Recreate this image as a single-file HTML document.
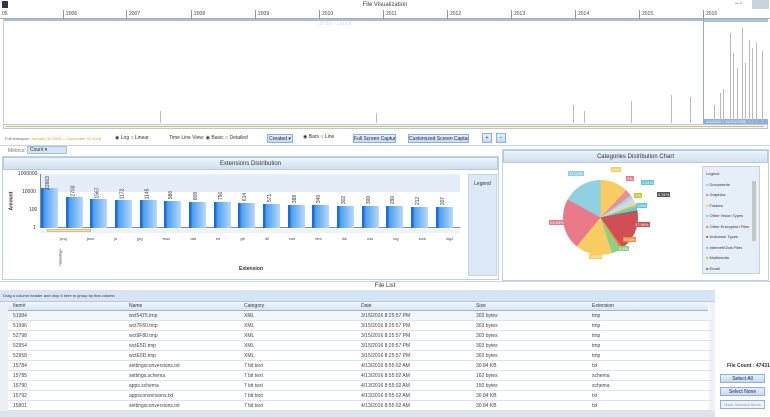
<!DOCTYPE html>
<html><head><style>
*{margin:0;padding:0;box-sizing:border-box}
body{width:770px;height:417px;overflow:hidden;background:#fff;font-family:"Liberation Sans",sans-serif;font-size:5px;color:#333;position:relative}
.a{position:absolute}
.yr{position:absolute;top:10px;height:9px;border-left:1px solid #999;font-size:5px;padding-left:2px;line-height:8px;color:#444}
.tl{position:absolute;width:1px;background:#b8b8c8;bottom:294px}
.hdr{position:absolute;background:linear-gradient(#eef4fb,#cfdff0);border:1px solid #b5c9e0;text-align:center;font-size:6px;color:#333}
.btn{position:absolute;background:linear-gradient(#e6f0fb,#c5daf1);border:1px solid #8fb0d8;font-size:5px;text-align:center;line-height:8px;color:#224;white-space:nowrap;overflow:hidden}
.bar{position:absolute;bottom:189px;width:17px;background:linear-gradient(90deg,#1a6fd6 0,#1a6fd6 2px,#4a9cf0 3px,#b9dafb)}
.bl{position:absolute;font-size:5px;transform:rotate(-90deg);color:#333}
.row{position:absolute;left:8px;width:704px;height:10px;border-bottom:1px solid #dde3ea;font-size:5px;line-height:10px;color:#444}
.row span,.gh span{position:absolute}
</style></head><body>
<div class="a" style="left:0;top:0;width:770px;height:10px;background:#fff"></div>
<div class="a" style="left:2px;top:1px;width:6px;height:7px;background:#335"></div>
<div class="a" style="left:0;top:2px;width:770px;text-align:center;font-size:6px;color:#444">File Visualization</div>
<div class="a" style="left:735px;top:1px;font-size:6px;color:#555">– ▫</div>
<div class="a" style="left:752px;top:0;width:17px;height:9px;background:#c9d3e0"></div>
<div class="a" style="left:0;top:10px;width:770px;height:9px;border-bottom:1px solid #aab"></div>
<div class="yr" style="left:0;border:none">05</div>
<div class="yr" style="left:63px">2006</div><div class="yr" style="left:126px">2007</div><div class="yr" style="left:191px">2008</div><div class="yr" style="left:255px">2009</div><div class="yr" style="left:319px">2010</div><div class="yr" style="left:383px">2011</div><div class="yr" style="left:447px">2012</div><div class="yr" style="left:511px">2013</div><div class="yr" style="left:575px">2014</div><div class="yr" style="left:639px">2015</div><div class="yr" style="left:703px">2016</div>
<div class="a" style="left:3px;top:19px;width:700px;height:2px;background:#a9bfd9"></div>
<div class="a" style="left:319px;top:21px;font-size:6px;color:#d8d8e0">2010 - 2019</div>
<div class="a" style="left:3px;top:19px;width:1px;height:104px;background:#ccd"></div>
<div class="a" style="left:703px;top:19px;width:66px;height:105px;border-left:1px solid #9ab"></div>
<div class="a" style="left:704px;top:19px;width:64px;height:3px;background:#a9c2de"></div>
<div class="a" style="left:704px;top:119px;width:64px;height:5px;background:#8fb0da;color:#fff;font-size:4px;line-height:5px;padding-left:2px;white-space:nowrap">1/1/2016 - 12/31/2016</div>
<div class="tl" style="left:160px;height:12px"></div><div class="tl" style="left:376px;height:10px"></div><div class="tl" style="left:573px;height:18px"></div><div class="tl" style="left:584px;height:12px"></div><div class="tl" style="left:631px;height:22px"></div><div class="tl" style="left:671px;height:28px"></div><div class="tl" style="left:690px;height:26px"></div>
<div class="tl" style="left:714px;height:18px"></div><div class="tl" style="left:720px;height:30px"></div><div class="tl" style="left:723px;height:34px"></div><div class="tl" style="left:730px;height:90px"></div><div class="tl" style="left:733px;height:70px"></div><div class="tl" style="left:737px;height:55px"></div><div class="tl" style="left:742px;height:95px"></div><div class="tl" style="left:745px;height:60px"></div><div class="tl" style="left:749px;height:83px"></div><div class="tl" style="left:752px;height:75px"></div><div class="tl" style="left:756px;height:80px"></div><div class="tl" style="left:762px;height:72px"></div>
<div class="a" style="left:3px;top:124px;width:765px;height:5px;border:1px solid #b7c8dc;background:#f4f7fb"></div>
<div class="a" style="left:6px;top:126px;width:758px;height:1px;background:#d9b862"></div>
<div class="a" style="left:5px;top:136px;font-size:4px;color:#666;white-space:nowrap">Full timespan: <span style="color:#e0a030">January 06 2005 — December 31 2016</span></div>
<div class="a" style="left:115px;top:135px;font-size:5px;white-space:nowrap">◉ Log ○ Linear</div>
<div class="a" style="left:169px;top:135px;font-size:5px;white-space:nowrap">Time Line View: ◉ Basic ○ Detailed</div>
<div class="btn" style="left:267px;top:134px;width:26px;height:9px">Created ▾</div>
<div class="a" style="left:303px;top:134px;font-size:5px;white-space:nowrap">◉ Bars ○ Line</div>
<div class="btn" style="left:353px;top:134px;width:43px;height:9px">Full Screen Capture</div>
<div class="btn" style="left:408px;top:134px;width:61px;height:9px">Customized Screen Capture</div>
<div class="btn" style="left:482px;top:133px;width:10px;height:10px">+</div>
<div class="btn" style="left:496px;top:133px;width:10px;height:10px">−</div>
<div class="a" style="left:0;top:145px;width:770px;height:1px;background:#c7d5e5"></div>
<div class="a" style="left:8px;top:148px;font-size:5px;color:#777">Metrics:</div>
<div class="a" style="left:27px;top:146px;width:40px;height:8px;background:#d5e4f5;border:1px solid #a8c0dc;font-size:5px;line-height:7px;padding-left:2px">Count ▾</div>
<div class="a" style="left:2px;top:156px;width:497px;height:124px;border:1px solid #c0d1e3"></div>
<div class="hdr" style="left:3px;top:157px;width:495px;height:13px;line-height:12px">Extensions Distribution</div>
<div class="a" style="left:40px;top:174px;width:420px;height:54px;background:#fff;border-left:1px solid #888;border-bottom:1px solid #888"></div>
<div class="a" style="left:41px;top:174px;width:419px;height:18px;background:#e4eef8"></div>
<div class="a" style="left:18px;top:171px;font-size:5px">1000000</div><div class="a" style="left:22px;top:189px;font-size:5px">10000</div><div class="a" style="left:29px;top:207px;font-size:5px">100</div><div class="a" style="left:33px;top:225px;font-size:5px">1</div>
<div class="a" style="left:2px;top:198px;font-size:5px;font-weight:bold;transform:rotate(-90deg)">Amount</div>
<div class="bar" style="left:41px;height:40px"></div><div class="bar" style="left:66px;height:31px"></div><div class="bar" style="left:90px;height:29px"></div><div class="bar" style="left:115px;height:28px"></div><div class="bar" style="left:140px;height:28px"></div><div class="bar" style="left:164px;height:27px"></div><div class="bar" style="left:189px;height:26px"></div><div class="bar" style="left:214px;height:26px"></div><div class="bar" style="left:238px;height:25px"></div><div class="bar" style="left:263px;height:24px"></div><div class="bar" style="left:288px;height:23px"></div><div class="bar" style="left:312px;height:23px"></div><div class="bar" style="left:337px;height:22px"></div><div class="bar" style="left:362px;height:22px"></div><div class="bar" style="left:386px;height:22px"></div><div class="bar" style="left:411px;height:21px"></div><div class="bar" style="left:436px;height:21px"></div>
<div class="bl" style="left:41px;top:180px">22663</div><div class="bl" style="left:68px;top:188px">2703</div><div class="bl" style="left:92px;top:190px">1567</div><div class="bl" style="left:117px;top:191px">1172</div><div class="bl" style="left:142px;top:191px">1145</div><div class="bl" style="left:167px;top:192px">986</div><div class="bl" style="left:192px;top:193px">809</div><div class="bl" style="left:217px;top:193px">756</div><div class="bl" style="left:241px;top:194px">614</div><div class="bl" style="left:266px;top:195px">571</div><div class="bl" style="left:291px;top:196px">388</div><div class="bl" style="left:315px;top:196px">340</div><div class="bl" style="left:340px;top:197px">302</div><div class="bl" style="left:365px;top:197px">300</div><div class="bl" style="left:389px;top:197px">290</div><div class="bl" style="left:414px;top:198px">212</div><div class="bl" style="left:439px;top:198px">207</div>
<div class="a" style="left:40px;top:229px;width:420px;height:4px;background:#eef3f9"></div>
<div class="a" style="left:47px;top:229px;width:44px;height:3px;background:#f2e2b0;border:1px solid #d8c080"></div>
<div class="a" style="left:41px;top:238px;font-size:4px;line-height:27px;">
<span style="position:absolute;left:4px;transform:rotate(-90deg);width:30px;top:0">&lt;missing&gt;</span></div>
<div class="a" style="left:60px;top:236px;width:400px;font-size:4px;color:#444;word-spacing:19px;white-space:nowrap;">png json js jpg resx dat txt gif dll xml htm lnk css log lock log2</div>
<div class="a" style="left:239px;top:266px;font-size:5px;font-weight:bold">Extension</div>
<div class="a" style="left:468px;top:174px;width:29px;height:102px;background:#dde9f6;border:1px solid #c3d4e7;font-size:5px;text-align:center;padding-top:6px">Legend</div>
<div class="a" style="left:502px;top:149px;width:267px;height:132px;border:1px solid #c0d1e3"></div>
<div class="hdr" style="left:503px;top:150px;width:265px;height:13px;line-height:12px">Categories Distribution Chart</div>
<div class="a" style="left:563px;top:180px;width:75px;height:75px;border-radius:50%;background:conic-gradient(#f6cc63 0 12%,#e98f9a 12% 15%,#a6d6e6 15% 16.5%,#d8d8d8 16.5% 19.5%,#c8c83a 19.5% 20.5%,#67c6d6 20.5% 22%,#555 22% 22.3%,#cf4f55 22.3% 40%,#ee8b3a 40% 41%,#8ccf88 41% 45%,#f6cc63 45% 61%,#e97a8a 61% 83%,#8fd0e2 83% 100%)"></div>
<div class="a" style="left:568px;top:171px;background:#8fd0e2;color:#fff;font-size:4px;padding:0 1px">17.03%</div>
<div class="a" style="left:611px;top:167px;background:#f6cc63;color:#fff;font-size:4px;padding:0 1px">12%</div>
<div class="a" style="left:626px;top:176px;background:#e97a8a;color:#fff;font-size:4px;padding:0 1px">3%</div>
<div class="a" style="left:641px;top:180px;background:#67c6d6;color:#fff;font-size:4px;padding:0 1px">1.51%</div>
<div class="a" style="left:634px;top:193px;background:#c8c83a;color:#fff;font-size:4px;padding:0 1px">1%</div>
<div class="a" style="left:657px;top:192px;background:#555;color:#fff;font-size:4px;padding:0 1px">0.31%</div>
<div class="a" style="left:636px;top:203px;background:#67c6d6;color:#fff;font-size:4px;padding:0 1px">1.6%</div>
<div class="a" style="left:634px;top:222px;background:#cf4f55;color:#fff;font-size:4px;padding:0 1px">17.96%</div>
<div class="a" style="left:549px;top:220px;background:#e97a8a;color:#fff;font-size:4px;padding:0 1px">24.53%</div>
<div class="a" style="left:623px;top:237px;background:#ee8b3a;color:#fff;font-size:4px;padding:0 1px">0.04%</div>
<div class="a" style="left:618px;top:246px;background:#8ccf88;color:#fff;font-size:4px;padding:0 1px">4.4%</div>
<div class="a" style="left:589px;top:254px;background:#f6cc63;color:#fff;font-size:4px;padding:0 1px">15.9%</div>
<div class="a" style="left:702px;top:166px;width:58px;height:108px;background:#e6eef8;border:1px solid #c0d1e3;font-size:4px;line-height:10.5px;padding:2px 0 0 3px;white-space:nowrap">Legend<br>
<span style="color:#8fd0e2">■</span> Documents<br><span style="color:#e97a8a">■</span> Graphics<br><span style="color:#f6cc63">■</span> Folders<br><span style="color:#8ccf88">■</span> Other Vision Types<br><span style="color:#ee8b3a">■</span> Other Encryption Files<br><span style="color:#cf4f55">■</span> Unknown Types<br><span style="color:#67c6d6">■</span> Internet/Chat Files<br><span style="color:#c8c83a">■</span> Multimedia<br><span style="color:#777">■</span> Email</div>
<div class="a" style="left:752px;top:181px;width:4px;height:60px;background:#c7c7c7"></div>
<div class="a" style="left:0;top:281px;width:770px;height:1px;background:#c7d5e5"></div>
<div class="a" style="left:0;top:283px;width:770px;text-align:center;font-size:6px">File List</div>
<div class="a" style="left:0;top:290px;width:715px;height:11px;background:#d6e4f4;font-size:4px;line-height:11px;padding-left:3px">Drag a column header and drop it here to group by that column</div>
<div class="a" style="left:0;top:301px;width:715px;height:116px;border:1px solid #b8c8da;background:#fff"></div>
<div class="a" style="left:0;top:302px;width:8px;height:115px;background:#eceff3"></div>
<div class="gh a" style="left:8px;top:302px;width:700px;height:9px;background:linear-gradient(#f2f6fb,#d9e5f2);border-bottom:1px solid #9fb6d0;font-size:5px;line-height:9px">
<span style="left:5px">Item#</span><span style="left:121px">Name</span><span style="left:236px">Category</span><span style="left:353px">Date</span><span style="left:468px">Size</span><span style="left:584px">Extension</span></div>
<div class="a" style="left:709px;top:302px;width:6px;height:115px;background:#eef1f5"></div>
<div class="row" style="top:311px;background:#f3f7fc"><span style="left:5px">51984</span><span style="left:121px">wct5475.tmp</span><span style="left:236px">XML</span><span style="left:353px">3/15/2016 8:25:57 PM</span><span style="left:468px">303 bytes</span><span style="left:584px">tmp</span></div>
<div class="row" style="top:321px"><span style="left:5px">51996</span><span style="left:121px">wct7F60.tmp</span><span style="left:236px">XML</span><span style="left:353px">3/15/2016 8:25:57 PM</span><span style="left:468px">303 bytes</span><span style="left:584px">tmp</span></div>
<div class="row" style="top:331px"><span style="left:5px">52798</span><span style="left:121px">wct9F80.tmp</span><span style="left:236px">XML</span><span style="left:353px">3/15/2016 8:25:57 PM</span><span style="left:468px">303 bytes</span><span style="left:584px">tmp</span></div>
<div class="row" style="top:341px"><span style="left:5px">52954</span><span style="left:121px">wctE5D.tmp</span><span style="left:236px">XML</span><span style="left:353px">3/15/2016 8:25:57 PM</span><span style="left:468px">303 bytes</span><span style="left:584px">tmp</span></div>
<div class="row" style="top:351px"><span style="left:5px">52958</span><span style="left:121px">wctE0D.tmp</span><span style="left:236px">XML</span><span style="left:353px">3/15/2016 8:25:57 PM</span><span style="left:468px">303 bytes</span><span style="left:584px">tmp</span></div>
<div class="row" style="top:361px"><span style="left:5px">15784</span><span style="left:121px">settingsconversions.txt</span><span style="left:236px">7 bit text</span><span style="left:353px">4/13/2016 8:55:02 AM</span><span style="left:468px">30.84 KB</span><span style="left:584px">txt</span></div>
<div class="row" style="top:371px"><span style="left:5px">15785</span><span style="left:121px">settings.schema</span><span style="left:236px">7 bit text</span><span style="left:353px">4/13/2016 8:55:02 AM</span><span style="left:468px">162 bytes</span><span style="left:584px">schema</span></div>
<div class="row" style="top:381px"><span style="left:5px">15790</span><span style="left:121px">apps.schema</span><span style="left:236px">7 bit text</span><span style="left:353px">4/13/2016 8:55:02 AM</span><span style="left:468px">150 bytes</span><span style="left:584px">schema</span></div>
<div class="row" style="top:391px"><span style="left:5px">15792</span><span style="left:121px">appsconversions.txt</span><span style="left:236px">7 bit text</span><span style="left:353px">4/13/2016 8:55:02 AM</span><span style="left:468px">30.84 KB</span><span style="left:584px">txt</span></div>
<div class="row" style="top:401px"><span style="left:5px">15801</span><span style="left:121px">settingsconversions.txt</span><span style="left:236px">7 bit text</span><span style="left:353px">4/13/2016 8:55:02 AM</span><span style="left:468px">30.84 KB</span><span style="left:584px">txt</span></div>
<div class="a" style="left:0;top:411px;width:715px;height:6px;background:#dfe4ea"></div>
<div class="a" style="left:727px;top:363px;font-size:5px;font-weight:bold;white-space:nowrap">File Count : 47431</div>
<div class="btn" style="left:720px;top:374px;width:45px;height:9px">Select All</div>
<div class="btn" style="left:720px;top:387px;width:45px;height:9px">Select None</div>
<div class="btn" style="left:720px;top:400px;width:45px;height:9px;color:#99a;background:#eef3f9;font-size:4px">Mark Selected Items</div>
</body></html>
